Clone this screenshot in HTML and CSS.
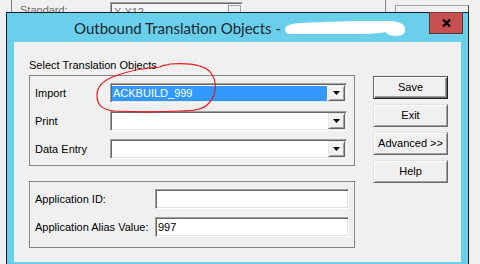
FILE: index.html
```html
<!DOCTYPE html>
<html>
<head>
<meta charset="utf-8">
<link rel="stylesheet" href="styles.css">
</head>
<body>
<div class="bgwin">
  <div class="bg-vline1"></div>
  <div class="bg-label">Standard:</div>
  <div class="bg-field"><span>X X12</span><span class="bg-drop"></span></div>
  <div class="bg-vline2"></div>
  <div class="bg-btn"></div>
</div>

<div class="dialog">
  <div class="titlebar">
    <span class="title">Outbound Translation Objects - </span>
    <svg class="scribble" width="122" height="18" viewBox="0 0 122 18"><path d="M0,9 C1,5 6,4 14,3 L40,2 L70,1 L104,1 C112,1 119,3 120,8 C121,13 118,16 110,16 L104,15 L100,12 L96,13 L80,14 L40,14 L6,14 C2,14 0,12 0,9 Z" fill="#fff"/></svg>
  </div>
  <div class="close"><svg width="9" height="8" viewBox="0 0 9 8"><path d="M1,0.5 L8,7.5 M8,0.5 L1,7.5" stroke="#000" stroke-width="2.2"/></svg></div>
  <div class="client">
    <div class="left">
      <div class="glabel">Select Translation Objects</div>
      <div class="group g1">
        <div class="row"><span class="lbl lbl1">Import</span>
          <div class="combo"><div class="sel">ACKBUILD_999</div><div class="drop"><svg width="7" height="4" viewBox="0 0 7 4"><path d="M0,0 H7 L3.5,4 Z" fill="#000"/></svg></div></div>
        </div>
        <div class="row"><span class="lbl lbl1">Print</span>
          <div class="combo"><div class="empty"></div><div class="drop"><svg width="7" height="4" viewBox="0 0 7 4"><path d="M0,0 H7 L3.5,4 Z" fill="#000"/></svg></div></div>
        </div>
        <div class="row"><span class="lbl lbl1">Data Entry</span>
          <div class="combo"><div class="empty"></div><div class="drop"><svg width="7" height="4" viewBox="0 0 7 4"><path d="M0,0 H7 L3.5,4 Z" fill="#000"/></svg></div></div>
        </div>
      </div>
      <div class="group g2">
        <div class="row"><span class="lbl lbl2">Application ID:</span><div class="field"></div></div>
        <div class="row"><span class="lbl lbl2">Application Alias Value:</span><div class="field">997</div></div>
      </div>
    </div>
    <div class="buttons">
      <div class="btn default">Save</div>
      <div class="btn">Exit</div>
      <div class="btn">Advanced &gt;&gt;</div>
      <div class="btn">Help</div>
    </div>
  </div>
</div>

<svg class="circle" width="480" height="264" viewBox="0 0 480 264"><path d="M160,67 C163,64 167,66 170,64 C186,63 204,64 211,73 C217,81 217,94 209,103 C204,109 196,111 180,111 C160,112 135,112 115,111 C102,110 97,105 97,95 C97,86 104,80 115,76 C128,71 145,68 160,67" fill="none" stroke="#e8191e" stroke-width="1.2"/></svg>
</body>
</html>
```

FILE: styles.css
```css
* { box-sizing: border-box; }
body {
  margin: 0;
  width: 480px;
  height: 264px;
  overflow: hidden;
  position: relative;
  background: #f0f0f0;
  font-family: "Liberation Sans", Arial, sans-serif;
  font-size: 11px;
  color: #000;
}

/* window behind */
.bgwin {
  display: flex;
  align-items: flex-start;
  height: 12px;
}
.bg-vline1 { margin-left: 11px; width: 1px; height: 12px; background: #7a7a7a; }
.bg-label { margin-left: 8px; margin-top: 4px; width: 90px; color: #6d6d6d; line-height: 13px; }
.bg-field {
  width: 133px; height: 20px; margin-top: 2px;
  border: 1px solid; border-color: #a0a0a0 #fff #fff #a0a0a0;
  box-shadow: inset 1px 1px #696969;
  background: #f7f7f7; color: #6d6d6d;
  padding: 3px 0 0 3px; line-height: 13px;
  display: flex; justify-content: space-between;
}
.bg-drop { width: 13px; height: 16px; margin-top: -1px; margin-right: 1px; border: 1px solid #a0a0a0; background: #f0f0f0; }
.bg-vline2 { margin-left: 142px; width: 1px; height: 12px; background: #8a8a8a; }
.bg-btn { margin-left: 9px; margin-top: 5px; width: 74px; height: 23px; border: 1px solid #a0a0a0; border-right-color: #404040; background: #f0f0f0; }

/* dialog window */
.dialog {
  position: absolute;
  left: 6px;
  top: 12px;
  width: 463px;
  height: 260px;
  border: 1px solid #1e1e1e;
  border-bottom: none;
  background: #69cfea;
  padding: 0 7px;
  display: flex;
  flex-direction: column;
}
.titlebar {
  height: 29px;
  display: flex;
  align-items: center;
  padding-left: 60px;
  font-family: Lato, "Noto Sans", sans-serif;
  font-size: 15px;
  color: #1b2633;
  white-space: pre;
}
.title { line-height: 29px; padding-top: 1px; }
.scribble { margin-left: 0; margin-top: 2px; }
.close {
  position: absolute;
  top: -1px;
  right: 5px;
  width: 34px;
  height: 22px;
  background: #c75050;
  border: 1px solid #5a3030;
  border-top-color: #7a3d3d;
  display: flex;
  align-items: center;
  justify-content: center;
}
.client {
  height: 220px;
  background: #f0f0f0;
  display: flex;
  align-items: flex-start;
}

.left { margin-left: 15px; width: 326px; display: flex; flex-direction: column; }
.glabel { margin-top: 17px; height: 13px; line-height: 13px; }
.group { width: 326px; border: 1px solid #858585; display: flex; flex-direction: column; gap: 8px; }
.g1 { margin-top: 3px; height: 91px; padding: 7px 7px 6px 5px; }
.g2 { margin-top: 15px; height: 67px; padding: 7px 5px 10px 5px; }
.row { display: flex; align-items: center; height: 20px; }
.lbl { line-height: 13px; }
.lbl1 { width: 75px; }
.lbl2 { width: 120px; }

.combo, .field {
  height: 20px;
  border: 1px solid;
  border-color: #a0a0a0 #ffffff #ffffff #a0a0a0;
  box-shadow: inset 1px 1px #696969, inset -1px -1px #e3e3e3;
  background: #fff;
}
.combo { width: 237px; padding: 1px; display: flex; }
.sel {
  flex: 1;
  margin: 1px 1px 0 0;
  background: #3399ff;
  color: #fff;
  line-height: 14px;
  padding-left: 1px;
}
.empty { flex: 1; }
.drop {
  width: 17px;
  height: 16px;
  background: #f0f0f0;
  border: 1px solid;
  border-color: #e3e3e3 #696969 #696969 #e3e3e3;
  box-shadow: inset 1px 1px #fff, inset -1px -1px #a0a0a0;
  display: flex;
  align-items: center;
  justify-content: center;
}
.field { width: 194px; padding: 2px 0 0 2px; line-height: 14px; }

.buttons { margin-left: 18px; margin-top: 34px; display: flex; flex-direction: column; gap: 5px; }
.btn {
  width: 75px;
  height: 23px;
  background: #f0f0f0;
  border: 1px solid;
  border-color: #e3e3e3 #696969 #696969 #e3e3e3;
  box-shadow: inset 1px 1px #fff, inset -1px -1px #a0a0a0;
  display: flex;
  align-items: center;
  justify-content: center;
  line-height: 13px;
}
.btn.default {
  border-color: #646464 #1e1e1e #1e1e1e #646464;
  box-shadow: inset 1px 1px #fff, inset -1px -1px #696969, inset -2px -2px #a0a0a0;
}

.circle { position: absolute; left: 0; top: 0; pointer-events: none; }
```
